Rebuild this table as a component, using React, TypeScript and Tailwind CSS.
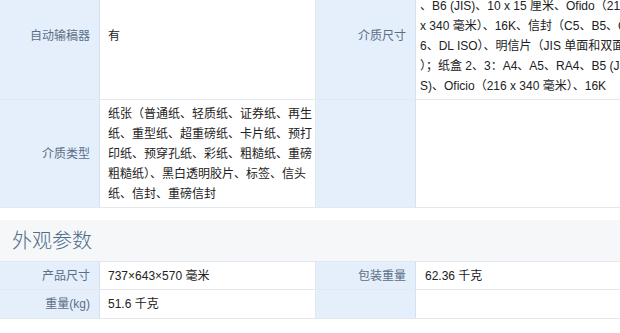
const font = { fontFamily: '"Liberation Sans", "Noto Sans CJK SC", sans-serif' };

const mediaSize = [
  "纸盒 1：A4、A5、A6、RA4、B5 (JIS)、A6",
  "、B6 (JIS)、10 x 15 厘米、Ofido（216",
  "x 340 毫米）、16K、信封（C5、B5、C",
  "6、DL ISO）、明信片（JIS 单面和双面",
  "）；纸盒 2、3：A4、A5、RA4、B5 (JI",
  "S)、Oficio（216 x 340 毫米）、16K",
];

const mediaType = [
  "纸张（普通纸、轻质纸、证券纸、再生",
  "纸、重型纸、超重磅纸、卡片纸、预打",
  "印纸、预穿孔纸、彩纸、粗糙纸、重磅",
  "粗糙纸）、黑白透明胶片、标签、信头",
  "纸、信封、重磅信封",
];

const Label = ({ children }: { children?: React.ReactNode }) => (
  <div className="flex items-center justify-end bg-[#e5effc] border-r border-[#d4e1f1] pr-[9px] text-[#5b6e86]">
    {children}
  </div>
);

const Value = ({ lines, className = "" }: { lines?: string[]; className?: string }) => (
  <div className={`flex items-center whitespace-nowrap text-[#222] leading-[20px] ${className}`}>
    <div>
      {lines?.map((l, i) => (
        <div key={i}>{l}</div>
      ))}
    </div>
  </div>
);

export default function App() {
  return (
    <div className="w-[620px] h-[333px] overflow-hidden bg-white text-[12px]" style={font}>
      <div className="w-[660px] mt-[-28px]">
        <div className="grid grid-cols-[100px_216px_100px_244px] h-[128px] border-b border-[#e3e8ee]">
          <Label>自动输稿器</Label>
          <Value lines={["有"]} className="pl-[8px] border-r border-[#e3e8ee]" />
          <Label>介质尺寸</Label>
          <Value lines={mediaSize} className="pl-[4px]" />
        </div>
        <div className="grid grid-cols-[100px_216px_100px_244px] h-[108px] border-b border-[#e3e8ee]">
          <Label>介质类型</Label>
          <Value lines={mediaType} className="pl-[8px] border-r border-[#e3e8ee]" />
          <Label />
          <Value />
        </div>

        <div className="mt-[12px] h-[42px] bg-[#f6f7f8] border-b border-[#e3e8ee] flex items-center pl-[12px]">
          <span className="text-[20px] font-light text-[#4d6b8b]">外观参数</span>
        </div>
        <div className="grid grid-cols-[100px_216px_100px_244px] h-[28px] border-b border-[#e3e8ee]">
          <Label>产品尺寸</Label>
          <Value lines={["737×643×570 毫米"]} className="pl-[8px] border-r border-[#e3e8ee]" />
          <Label>包装重量</Label>
          <Value lines={["62.36 千克"]} className="pl-[9px]" />
        </div>
        <div className="grid grid-cols-[100px_216px_100px_244px] h-[29px] border-b border-[#e3e8ee]">
          <Label>重量(kg)</Label>
          <Value lines={["51.6 千克"]} className="pl-[8px] border-r border-[#e3e8ee]" />
          <Label />
          <Value />
        </div>
      </div>
    </div>
  );
}
